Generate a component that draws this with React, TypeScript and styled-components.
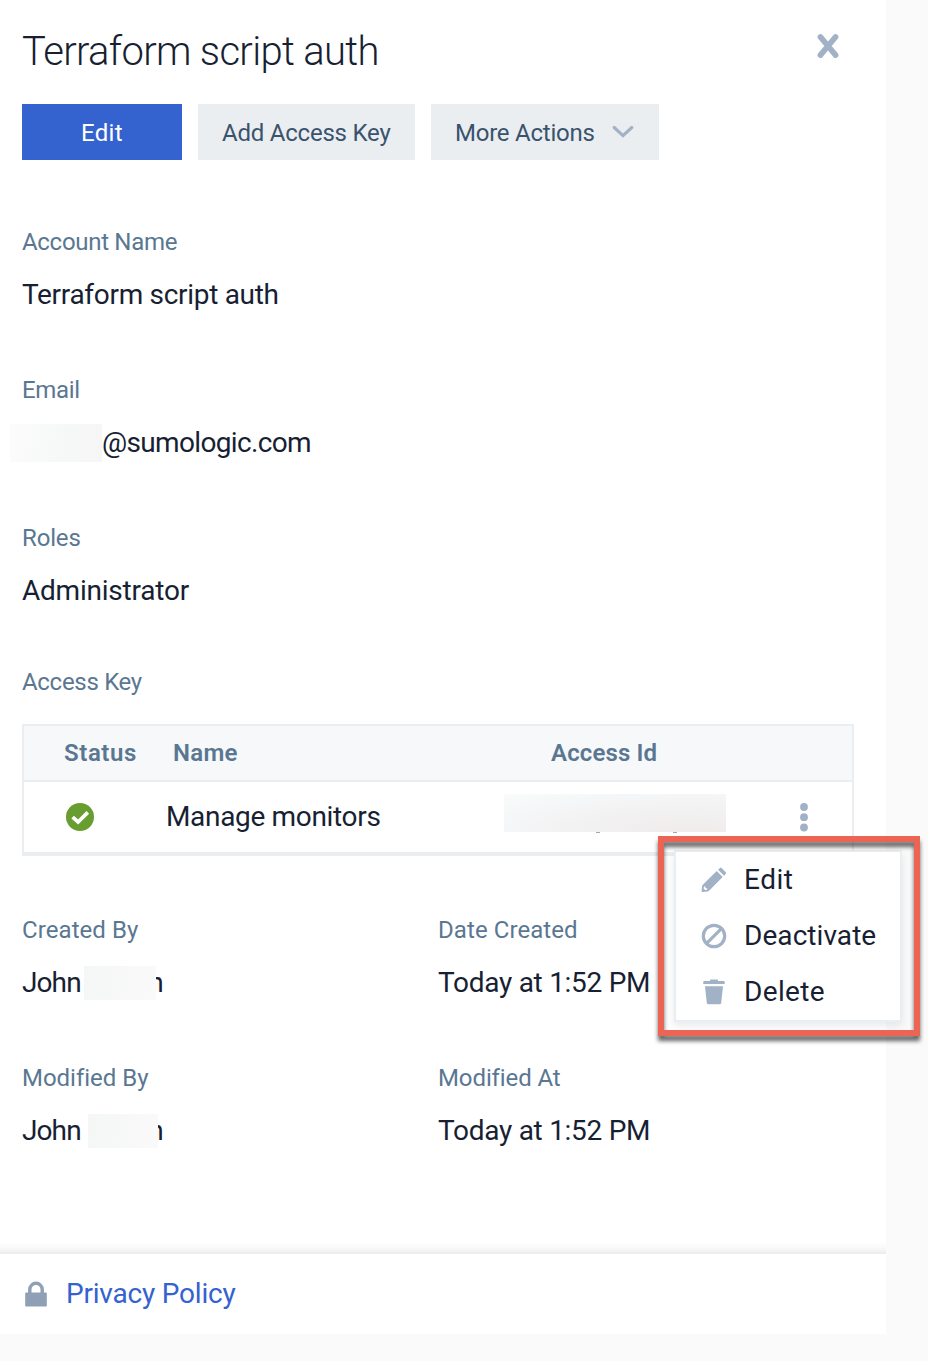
import React from "react";
import styled, { createGlobalStyle } from "styled-components";

const ink = "#181f33";
const slate = "#5a7792";
const iconBlue = "#a1b2c6";
const line = "#eaeef1";

const GlobalStyle = createGlobalStyle`
  * { box-sizing: border-box; }
  body {
    margin: 0;
    background: #fff;
    color: ${ink};
    font-family: Roboto, "Liberation Sans", sans-serif;
  }
`;

const Page = styled.div`
  height: 1361px;
  background: #fafafa;
`;

const Panel = styled.main`
  display: flex;
  flex-direction: column;
  width: 886px;
  height: 1334px;
  background: #fff;
`;

const Content = styled.div`
  flex: 1;
  padding: 22px 32px 0 22px;
`;

const Header = styled.header`
  display: flex;
  justify-content: space-between;
  align-items: flex-start;
`;

const Title = styled.h1`
  height: 57px;
  margin: 0;
  font-size: 40px;
  font-weight: 300;
  line-height: 59px;
  letter-spacing: -0.68px;
`;

const CloseButton = styled.button`
  display: flex;
  margin: 10px 13px 0 0;
  padding: 0;
  border: 0;
  background: none;
`;

const Toolbar = styled.div`
  display: flex;
  gap: 16px;
  margin-top: 25px;
`;

const Button = styled.button<{ $primary?: boolean; $width: number; $inset: number; $track: number }>`
  display: flex;
  align-items: center;
  width: ${(p) => p.$width}px;
  height: 56px;
  padding: 2px 0 0 ${(p) => p.$inset}px;
  border: 0;
  background: ${(p) => (p.$primary ? "#3462cf" : "#eaeef1")};
  color: ${(p) => (p.$primary ? "#fff" : "#3a536d")};
  font: 400 24px/28px Roboto, "Liberation Sans", sans-serif;
  letter-spacing: ${(p) => p.$track}px;
  white-space: nowrap;

  svg { margin: -2px 0 0 17px; }
`;

const Field = styled.section<{ $top: number }>`
  margin-top: ${(p) => p.$top}px;
`;

const Label = styled.div<{ $track?: number }>`
  color: ${slate};
  font-size: 24px;
  line-height: 34px;
  letter-spacing: ${(p) => p.$track ?? 0}px;
`;

const Value = styled.div<{ $track?: number }>`
  display: flex;
  height: 35px;
  margin-top: 18px;
  font-size: 28px;
  line-height: 35px;
  letter-spacing: ${(p) => p.$track ?? 0}px;
  white-space: nowrap;
`;

const EmailMask = styled.span`
  width: 92px;
  height: 38px;
  margin: -1px 0 0 -12px;
  background: linear-gradient(100deg, #fcfcfc, #f7f8f8 50%, #f6f6f6);
`;

const FirstName = styled.span<{ $width: number }>`
  width: ${(p) => p.$width}px;
  letter-spacing: -0.9px;
`;

const NameMask = styled.span<{ $width: number }>`
  position: relative;
  z-index: 1;
  width: ${(p) => p.$width}px;
  height: 34px;
  margin-top: 1px;
  background: linear-gradient(100deg, #f5f6f6, #fafafa);
`;

const NameEnd = styled.span<{ $overlap: number }>`
  margin-left: -${(p) => p.$overlap}px;
`;

const Table = styled.div`
  width: 832px;
  height: 132px;
  margin-top: 25px;
  border: 2px solid ${line};
  border-bottom-width: 4px;
`;

const TableHead = styled.div`
  display: grid;
  grid-template-columns: 109px 378px 1fr;
  height: 56px;
  padding-left: 40px;
  border-bottom: 2px solid ${line};
  background: #f6f8fa;
  color: ${slate};
  font-size: 24px;
  font-weight: 600;
  line-height: 54px;
`;

const HeadCell = styled.span<{ $track: number }>`
  letter-spacing: ${(p) => p.$track}px;
`;

const TableRow = styled.div`
  display: grid;
  grid-template-columns: 99px 339px 222px 1fr;
  align-items: start;
  height: 70px;
  padding-left: 42px;
`;

const StatusIcon = styled.svg`
  margin-top: 21px;
`;

const KeyName = styled.span`
  padding: 17px 0 0 1px;
  font-size: 28px;
  line-height: 35px;
  letter-spacing: -0.33px;
`;

const KeyMask = styled.div`
  position: relative;
  height: 38px;
  margin-top: 12px;
  background: radial-gradient(ellipse at 85% 100%, #f0ebeb, #f2f1f2 40%, #f5f6f7 70%, #fafbfb);
`;

const Descender = styled.i<{ $left: number }>`
  position: absolute;
  top: 38px;
  left: ${(p) => p.$left}px;
  width: 4px;
  height: 1px;
  background: #a6a7ae;
`;

const MoreButton = styled.button`
  display: flex;
  margin: 21px 0 0 74px;
  padding: 0;
  border: 0;
  background: none;
`;

const MenuAnchor = styled.div`
  position: relative;
`;

const Highlight = styled.div`
  position: absolute;
  top: -20px;
  left: 636px;
  width: 262px;
  height: 200px;
  border: 6px solid #ec6453;
  filter: drop-shadow(0 5px 2px rgba(0, 0, 0, 0.6));
`;

const Menu = styled.div`
  position: absolute;
  top: -6px;
  left: 652px;
  width: 228px;
  height: 172px;
  border: 2px solid ${line};
  background: #fff;
  box-shadow: 0 4px 8px rgba(60, 80, 110, 0.12);
`;

const MenuItem = styled.div<{ $track: number }>`
  display: flex;
  height: 56px;
  padding: 10px 0 0 24px;
  font-size: 28px;
  line-height: 35px;
  letter-spacing: ${(p) => p.$track}px;

  svg { flex: none; margin: 4px 16px 0 0; }
`;

const Columns = styled.div<{ $top: number }>`
  display: grid;
  grid-template-columns: 416px 1fr;
  margin-top: ${(p) => p.$top}px;
`;

const FooterShade = styled.div`
  height: 12px;
  background: linear-gradient(#ffffff, #f9f9f9 50%, #ebebeb);
`;

const Footer = styled.footer`
  display: flex;
  align-items: flex-start;
  height: 80px;
  padding: 22px 0 0 24px;

  svg { margin-top: 5px; }
`;

const PolicyLink = styled.a`
  margin-left: 17px;
  color: #3462cf;
  font-size: 28px;
  line-height: 35px;
  letter-spacing: -0.2px;
`;

const CloseIcon = () => (
  <svg width="26" height="28" viewBox="0 0 26 28" fill="none" stroke={iconBlue} strokeWidth="5.6" strokeLinecap="round">
    <path d="M5.4 4.9 20.6 23.1M20.6 4.9 5.4 23.1" />
  </svg>
);

const ChevronIcon = () => (
  <svg width="22" height="14" viewBox="0 0 22 14" fill="none" stroke={iconBlue} strokeWidth="3.1" strokeLinecap="round">
    <path d="M2.2 2.5 11 10.6 19.8 2.5" />
  </svg>
);

const CheckIcon = () => (
  <StatusIcon width="28" height="28" viewBox="0 0 28 28">
    <circle cx="14" cy="14" r="14" fill="#689e2f" />
    <path d="M6.6 14.2 12.1 19 21.8 9.4" fill="none" stroke="#fff" strokeWidth="3.7" />
  </StatusIcon>
);

const DotsIcon = () => (
  <svg width="8" height="30" viewBox="0 0 8 30" fill={iconBlue}>
    <circle cx="4" cy="4" r="3.9" />
    <circle cx="4" cy="14.2" r="3.9" />
    <circle cx="4" cy="24.5" r="3.9" />
  </svg>
);

const PencilIcon = () => (
  <svg width="28" height="28" viewBox="0 0 28 28" fill={iconBlue}>
    <path d="M18.1 3.7 20 1.9Q20.8 1.3 21.6 2L25.8 6.2Q26.5 7 25.8 7.8L24 9.7Z" />
    <path fillRule="evenodd" d="M16.7 5.1 22.7 11.1 9 24.8Q8.4 25.4 7.4 25.5L2.6 26Q1.5 26 1.6 25L2 20.2Q2.1 19.5 2.8 18.8ZM3.9 20.7 3.7 22.7 5.1 24.1 7.1 23.8 7.3 22.4 5.5 22.1 5.3 20.3Z" />
  </svg>
);

const BanIcon = () => (
  <svg width="28" height="28" viewBox="0 0 28 28" fill="none" stroke={iconBlue} strokeWidth="3.2">
    <circle cx="14" cy="14" r="10.7" />
    <path d="M6.6 21.4 21.4 6.6" />
  </svg>
);

const TrashIcon = () => (
  <svg width="28" height="28" viewBox="0 0 28 28" fill={iconBlue}>
    <path d="M4 3Q3.3 3 3.3 3.8V6H24.7V3.8Q24.7 3 24 3H18V2.2Q18 1.5 17.2 1.5H10.8Q10 1.5 10 2.2V3Z" />
    <path d="M5 8.2H23L21.2 25Q21 26.2 19.8 26.2H8.2Q7 26.2 6.8 25Z" />
  </svg>
);

const LockIcon = () => (
  <svg width="25" height="28" viewBox="0 0 25 28">
    <path d="M5.8 12V8.5a6.2 6.2 0 0 1 12.4 0V12" fill="none" stroke="#8f9fb5" strokeWidth="3.4" />
    <rect x="1.2" y="11.6" width="21.6" height="14" rx="1" fill="#8f9fb5" />
  </svg>
);

export default function App() {
  return (
    <Page>
      <GlobalStyle />
      <Panel>
        <Content>
          <Header>
            <Title>Terraform script auth</Title>
            <CloseButton aria-label="Close"><CloseIcon /></CloseButton>
          </Header>
          <Toolbar>
            <Button $primary $width={160} $inset={59} $track={0.3}>Edit</Button>
            <Button $width={217} $inset={24} $track={-0.22}>Add Access Key</Button>
            <Button $width={228} $inset={24} $track={-0.23}>More Actions<ChevronIcon /></Button>
          </Toolbar>

          <Field $top={65}>
            <Label $track={-0.3}>Account Name</Label>
            <Value $track={-0.3}>Terraform script auth</Value>
          </Field>
          <Field $top={61}>
            <Label $track={-0.35}>Email</Label>
            <Value $track={-0.66}><EmailMask />@sumologic.com</Value>
          </Field>
          <Field $top={61}>
            <Label $track={-0.15}>Roles</Label>
            <Value $track={-0.22}>Administrator</Value>
          </Field>
          <Field $top={57}>
            <Label $track={-0.3}>Access Key</Label>
            <Table>
              <TableHead>
                <HeadCell $track={0.59}>Status</HeadCell>
                <HeadCell $track={0.26}>Name</HeadCell>
                <HeadCell $track={0.12}>Access Id</HeadCell>
              </TableHead>
              <TableRow>
                <CheckIcon />
                <KeyName>Manage monitors</KeyName>
                <KeyMask><Descender $left={92} /><Descender $left={169} /></KeyMask>
                <MoreButton aria-label="Key actions"><DotsIcon /></MoreButton>
              </TableRow>
            </Table>
            <MenuAnchor>
              <Menu>
                <MenuItem $track={0.5}><PencilIcon />Edit</MenuItem>
                <MenuItem $track={0.06}><BanIcon />Deactivate</MenuItem>
                <MenuItem $track={0.35}><TrashIcon />Delete</MenuItem>
              </Menu>
              <Highlight />
            </MenuAnchor>
          </Field>

          <Columns $top={57}>
            <div>
              <Label $track={0.08}>Created By</Label>
              <Value>
                <FirstName $width={62}>John</FirstName>
                <NameMask $width={72} />
                <NameEnd $overlap={7.8}>n</NameEnd>
              </Value>
            </div>
            <div>
              <Label $track={0.08}>Date Created</Label>
              <Value $track={-0.28}>Today at 1:52 PM</Value>
            </div>
          </Columns>
          <Columns $top={61}>
            <div>
              <Label $track={-0.02}>Modified By</Label>
              <Value>
                <FirstName $width={66}>John</FirstName>
                <NameMask $width={70} />
                <NameEnd $overlap={9.8}>n</NameEnd>
              </Value>
            </div>
            <div>
              <Label $track={-0.1}>Modified At</Label>
              <Value $track={-0.28}>Today at 1:52 PM</Value>
            </div>
          </Columns>
        </Content>
        <FooterShade />
        <Footer>
          <LockIcon />
          <PolicyLink>Privacy Policy</PolicyLink>
        </Footer>
      </Panel>
    </Page>
  );
}
